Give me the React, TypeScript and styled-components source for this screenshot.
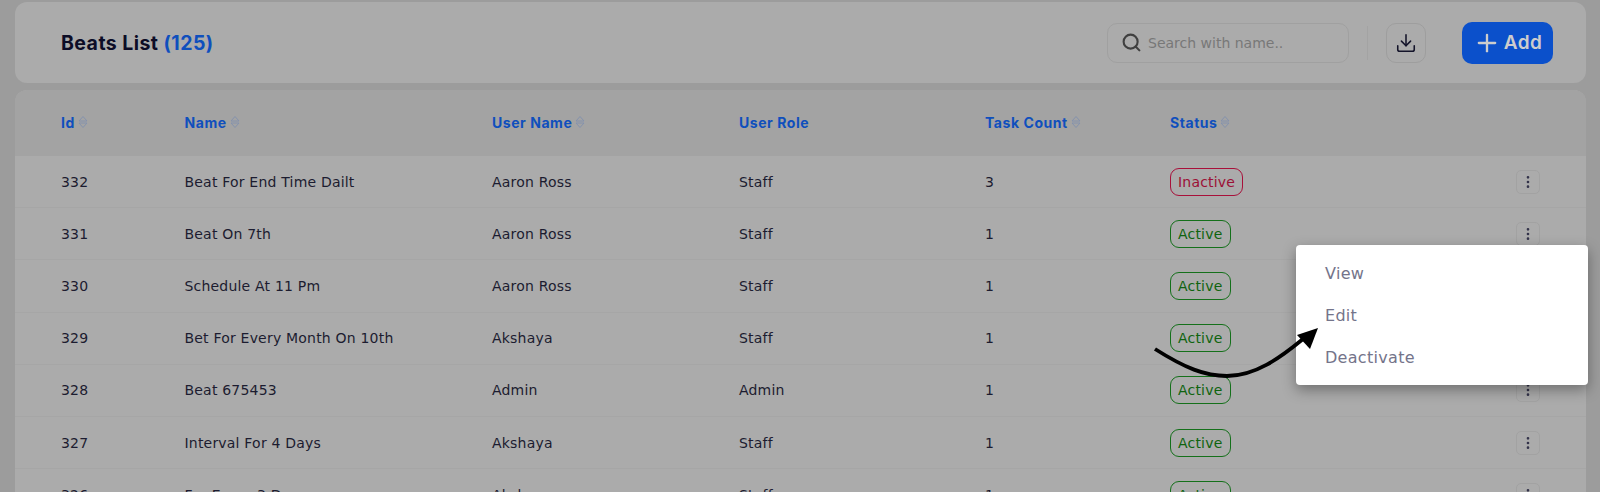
import React from "react";
import styled, { createGlobalStyle } from "styled-components";
import { Search, Download, Plus, EllipsisVertical } from "lucide-react";

const GlobalStyle = createGlobalStyle`
  html, body {
    margin: 0;
    height: 492px;
    overflow: hidden;
    background: #9c9c9c;
    font-family: "DejaVu Sans", Inter, sans-serif;
  }
`;

const Page = styled.div`
  position: relative;
  height: 492px;
  overflow: hidden;
  padding: 2px 14px 0 15px;
  display: flex;
  flex-direction: column;
  gap: 7px;
`;

const HeaderCard = styled.div`
  flex: none;
  height: 81px;
  background: #ababab;
  border-radius: 12px;
  display: flex;
  align-items: center;
  padding: 0 33px 0 46px;
`;

const Title = styled.h1`
  margin: 0;
  flex: 1;
  font-family: Inter, sans-serif;
  font-size: 19.5px;
  font-weight: 700;
  letter-spacing: 0.45px;
  color: #0c0c26;

  span {
    color: #0f4fbd;
  }
`;

const SearchBox = styled.div`
  width: 242px;
  height: 40px;
  box-sizing: border-box;
  border: 1px solid #a0a0a0;
  border-radius: 10px;
  display: flex;
  align-items: center;
  gap: 6px;
  padding: 0 13px;
  font-size: 14px;
  color: #787878;
  svg {
    color: #404040;
  }
`;

const Divider = styled.div`
  width: 1px;
  height: 34px;
  background: #a3a3a3;
  margin: 0 18px;
`;

const IconButton = styled.div`
  width: 40px;
  height: 40px;
  box-sizing: border-box;
  border: 1px solid #9e9e9e;
  border-radius: 10px;
  display: flex;
  align-items: center;
  justify-content: center;
  color: #14142a;
  margin-right: 36px;
`;

const AddButton = styled.div`
  width: 91px;
  height: 42px;
  background: #0b50cb;
  border-radius: 10px;
  display: flex;
  align-items: center;
  justify-content: center;
  gap: 3px;
  color: #cdcdcd;
  font-family: Inter, sans-serif;
  font-size: 19px;
  font-weight: 600;
  letter-spacing: 0.5px;
`;

const TableCard = styled.div`
  flex: 1;
  background: #ababab;
  border-radius: 12px 12px 0 0;
  overflow: hidden;
`;

const Row = styled.div<{ $head?: boolean }>`
  display: grid;
  grid-template-columns: 123.5px 307.5px 247px 246px 185px 1fr 24px;
  align-items: center;
  height: ${({ $head }) => ($head ? "66px" : "52.2px")};
  box-sizing: border-box;
  padding: 0 46px 0 46px;
  background: ${({ $head }) => ($head ? "#a3a3a3" : "transparent")};
  border-bottom: ${({ $head }) => ($head ? "0" : "1px solid #a6a6a6")};
`;

const HeadCell = styled.div`
  display: flex;
  align-items: center;
  gap: 1px;
  padding-bottom: 2px;
  font-family: Inter, sans-serif;
  font-size: 14px;
  font-weight: 700;
  letter-spacing: 0.55px;
  color: #0f4fbd;
`;

const Cell = styled.div`
  font-size: 14px;
  letter-spacing: 0.2px;
  color: #1c1c30;
`;

const Badge = styled.span<{ $active: boolean }>`
  display: inline-flex;
  align-items: center;
  height: 28px;
  box-sizing: border-box;
  padding: 0 7px;
  border-radius: 9px;
  font-size: 14px;
  letter-spacing: 0.2px;
  border: 1px solid ${({ $active }) => ($active ? "#14701a" : "#a8103a")};
  color: ${({ $active }) => ($active ? "#0f640f" : "#9c1036")};
`;

const RowMenu = styled.div`
  width: 24px;
  height: 24px;
  box-sizing: border-box;
  border: 1px solid #a2a2a2;
  border-radius: 5px;
  display: flex;
  align-items: center;
  justify-content: center;
  color: #33334a;
`;

const Menu = styled.div`
  position: absolute;
  left: 1296px;
  top: 245px;
  width: 292px;
  height: 140px;
  box-sizing: border-box;
  padding: 7px 0;
  background: #fff;
  border-radius: 4px;
  box-shadow: 0 5px 14px rgba(0, 0, 0, 0.35);
  display: flex;
  flex-direction: column;
`;

const MenuItem = styled.div`
  flex: 1;
  display: flex;
  align-items: center;
  padding-left: 29px;
  font-size: 16px;
  letter-spacing: 0.3px;
  color: #74748a;
`;

const Arrow = styled.svg`
  position: absolute;
  left: 1150px;
  top: 320px;
`;

const SortIcon = () => (
  <svg width="14" height="14" viewBox="0 0 14 14" fill="none" stroke="#8492ad" strokeWidth="1">
    <path d="M3 6 L7 1.5 L11 6 Z" />
    <path d="M3 8 L7 12.5 L11 8 Z" />
  </svg>
);

const columns = [
  { label: "Id", sort: true },
  { label: "Name", sort: true },
  { label: "User Name", sort: true },
  { label: "User Role", sort: false },
  { label: "Task Count", sort: true },
  { label: "Status", sort: true },
];

const beats = [
  { id: 332, name: "Beat For End Time Dailt", user: "Aaron Ross", role: "Staff", tasks: 3, active: false },
  { id: 331, name: "Beat On 7th", user: "Aaron Ross", role: "Staff", tasks: 1, active: true },
  { id: 330, name: "Schedule At 11 Pm", user: "Aaron Ross", role: "Staff", tasks: 1, active: true },
  { id: 329, name: "Bet For Every Month On 10th", user: "Akshaya", role: "Staff", tasks: 1, active: true },
  { id: 328, name: "Beat 675453", user: "Admin", role: "Admin", tasks: 1, active: true },
  { id: 327, name: "Interval For 4 Days", user: "Akshaya", role: "Staff", tasks: 1, active: true },
  { id: 326, name: "For Every 3 Days", user: "Akshaya", role: "Staff", tasks: 1, active: true },
];

const App: React.FC = () => {
  return (
    <Page>
      <GlobalStyle />
      <HeaderCard>
        <Title>
          Beats List <span>(125)</span>
        </Title>
        <SearchBox>
          <Search size={21} strokeWidth={2.4} />
          Search with name..
        </SearchBox>
        <Divider />
        <IconButton>
          <Download size={22} strokeWidth={1.7} />
        </IconButton>
        <AddButton>
          <Plus size={28} strokeWidth={2} />
          Add
        </AddButton>
      </HeaderCard>
      <TableCard>
        <Row $head>
          {columns.map((col) => (
            <HeadCell key={col.label}>
              {col.label}
              {col.sort && <SortIcon />}
            </HeadCell>
          ))}
        </Row>
        {beats.map((beat) => (
          <Row key={beat.id}>
            <Cell>{beat.id}</Cell>
            <Cell>{beat.name}</Cell>
            <Cell>{beat.user}</Cell>
            <Cell>{beat.role}</Cell>
            <Cell>{beat.tasks}</Cell>
            <div>
              <Badge $active={beat.active}>{beat.active ? "Active" : "Inactive"}</Badge>
            </div>
            <RowMenu>
              <EllipsisVertical size={16} />
            </RowMenu>
          </Row>
        ))}
      </TableCard>
      <Menu>
        <MenuItem>View</MenuItem>
        <MenuItem>Edit</MenuItem>
        <MenuItem>Deactivate</MenuItem>
      </Menu>
      <Arrow width="180" height="70" viewBox="1150 320 180 70">
        <path d="M1155 349 C1185 368 1205 376 1227 376 C1255 376 1280 358 1303 339" fill="none" stroke="#000" strokeWidth="3.8" />
        <path d="M1318 328 L1297 335 L1310 349 Z" fill="#000" />
      </Arrow>
    </Page>
  );
};

export default App;
